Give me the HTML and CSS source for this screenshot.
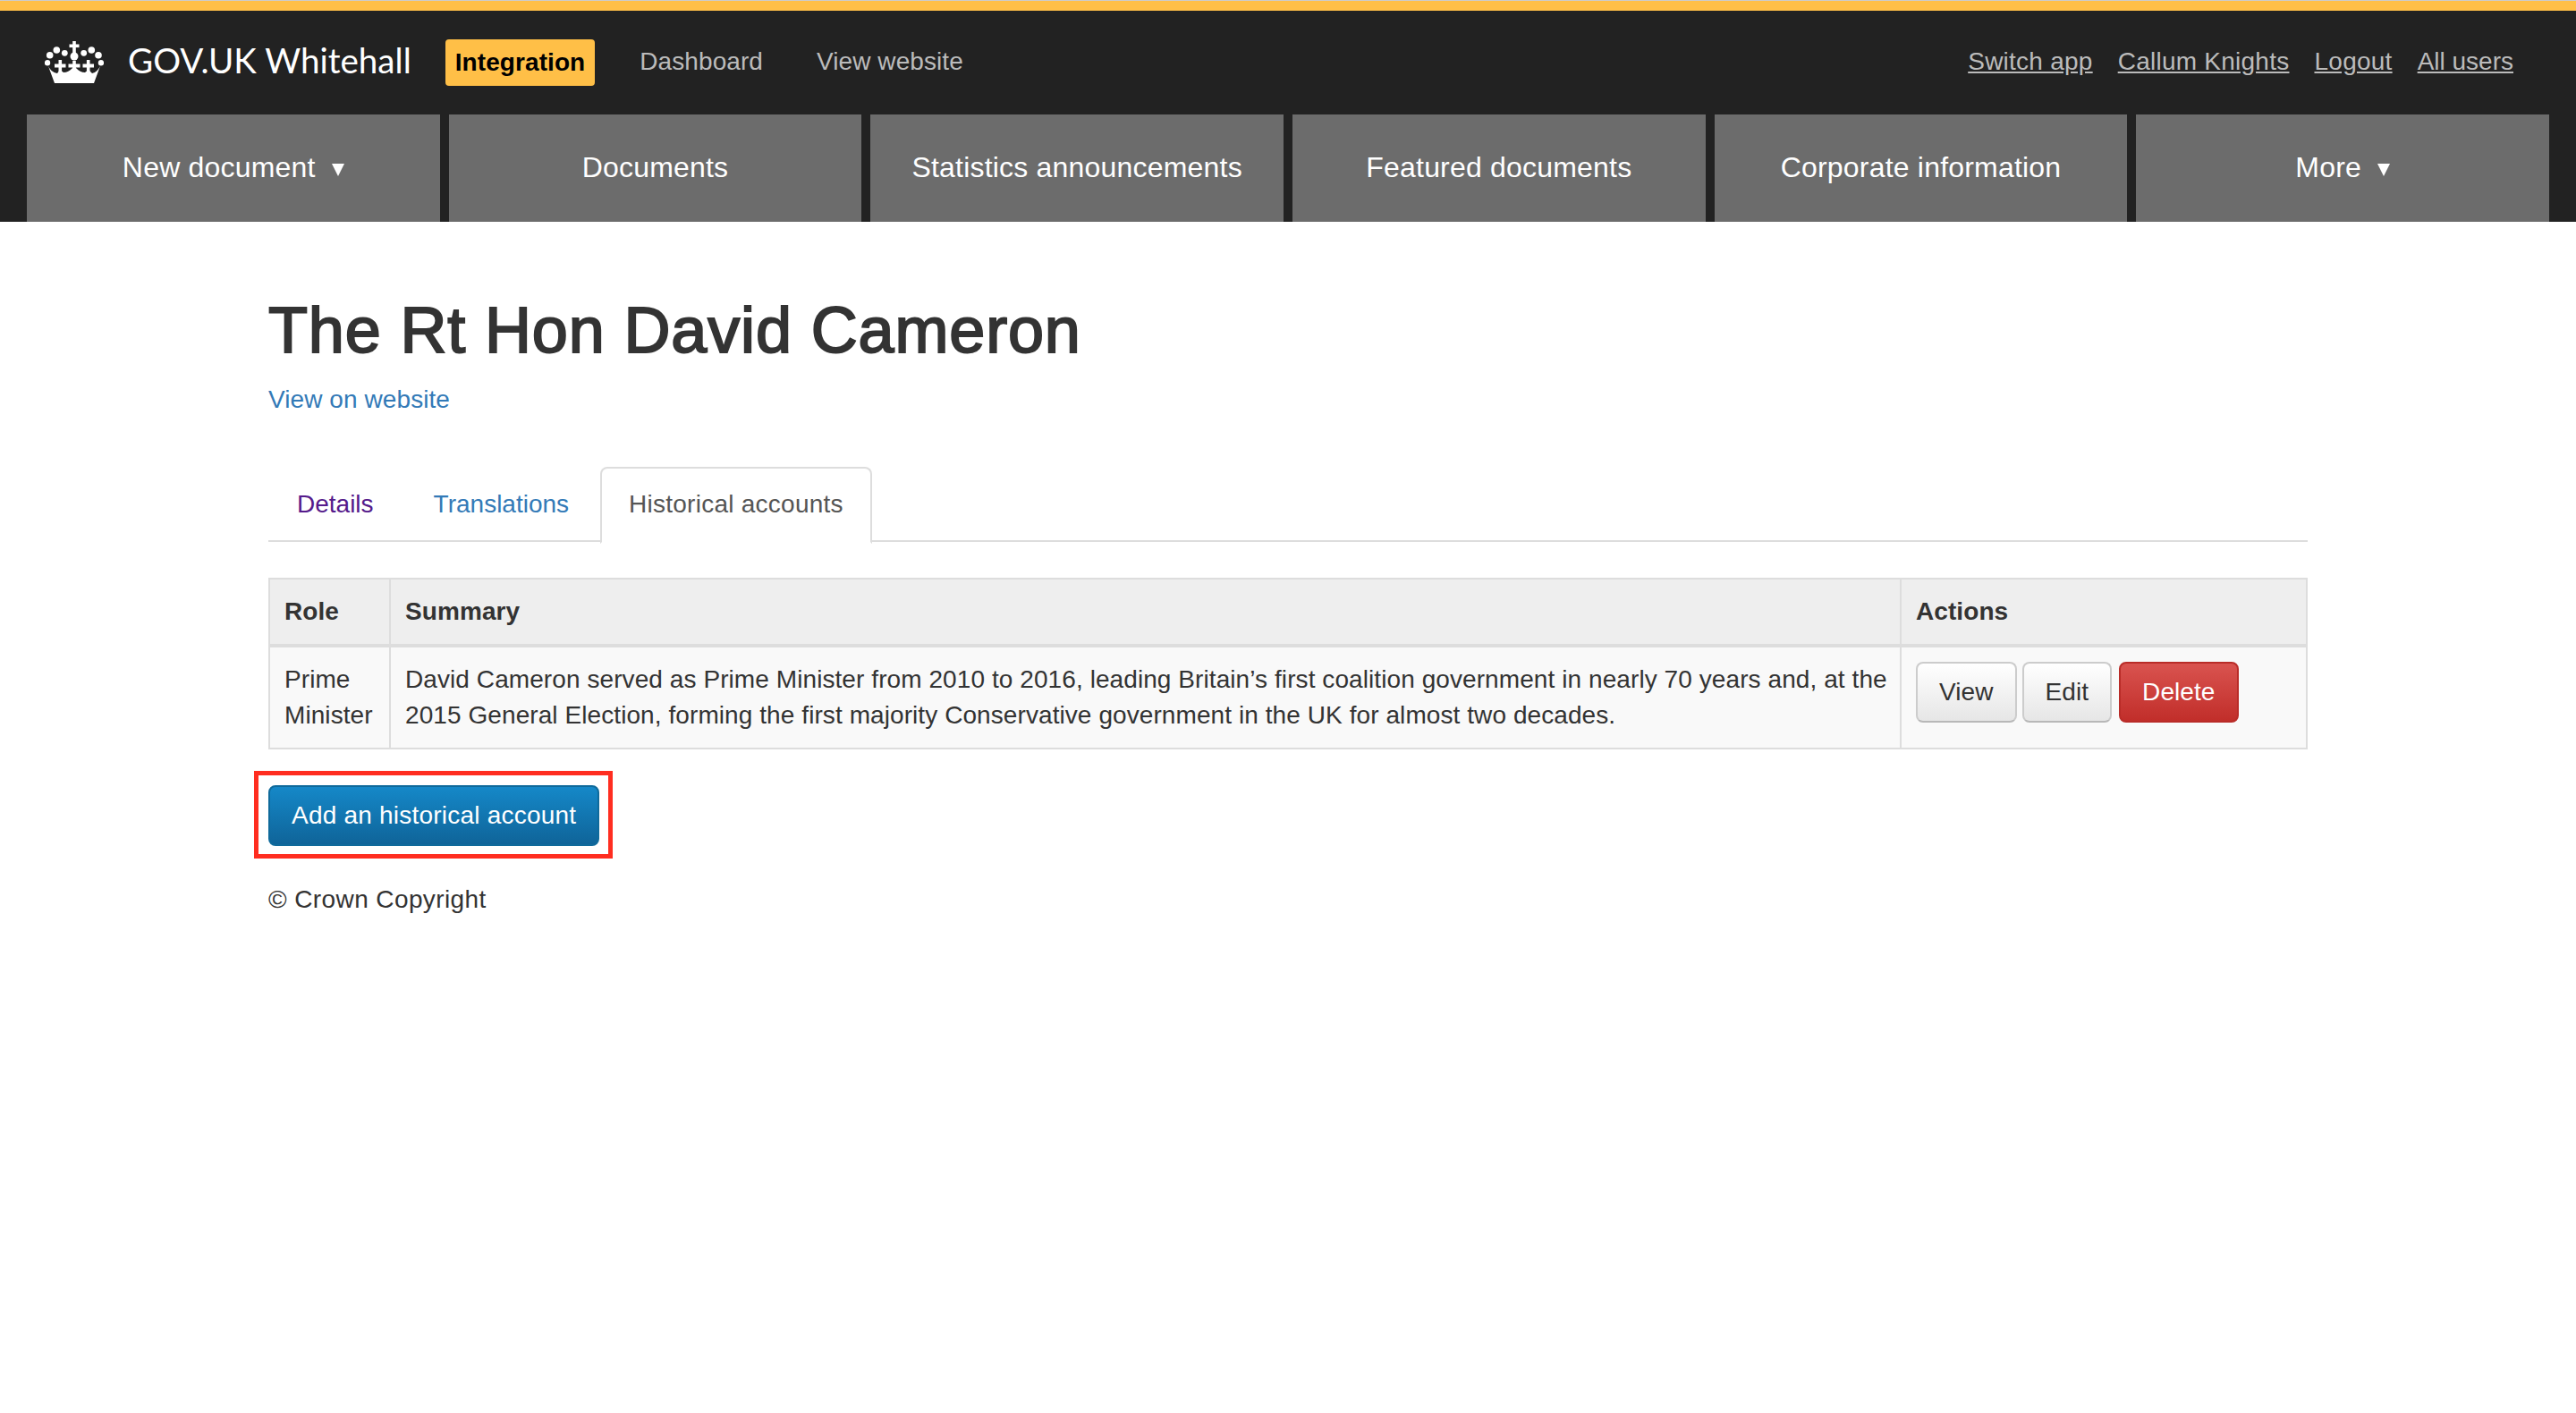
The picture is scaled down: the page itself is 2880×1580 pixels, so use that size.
FILE: index.html
```html
<!DOCTYPE html>
<html lang="en">

<head>
    <meta charset="UTF-8">
    <meta name="viewport" content="width=device-width, initial-scale=1.0">
    <title>The Rt Hon David Cameron - GOV.UK Whitehall</title>
    <link rel="stylesheet" href="styles.css">
</head>

<body>
    <header class="site-header">
        <div class="top-row">
            <a class="brand" href="#">
                <svg class="crown" viewBox="0 0 66 48" aria-hidden="true">
                    <g fill="#fff">
                        <rect x="31.2" y="1" width="3.6" height="13" />
                        <rect x="27.5" y="4.5" width="11" height="3.6" />
                        <circle cx="33" cy="18" r="4.5" />
                        <circle cx="22.3" cy="14.3" r="3.4" />
                        <circle cx="43.7" cy="14.3" r="3.4" />
                        <circle cx="13.3" cy="11" r="3.8" />
                        <circle cx="52.3" cy="11" r="3.8" />
                        <circle cx="5.7" cy="16.7" r="3.8" />
                        <circle cx="60" cy="16.7" r="3.8" />
                        <circle cx="3" cy="25.3" r="3.2" />
                        <circle cx="63" cy="25.3" r="3.2" />
                        <path d="M15.5 22 H19.1 V26.5 H23.5 V30.4 H19.1 V40 H15.5 V30.4 H11 V26.5 H15.5 Z" />
                        <path d="M31.2 23 H34.8 V26.5 H39.5 V30.4 H34.8 V36 H31.2 V30.4 H26.5 V26.5 H31.2 Z" />
                        <path d="M46.9 22 H50.5 V26.5 H55 V30.4 H50.5 V40 H46.9 V30.4 H42.5 V26.5 H46.9 Z" />
                        <path d="M4 29 L11 48 H55 L62 29 C60 33 57 36 53 37 L49 33 L45 36 C41 36 38 34 36 32 L33 29 L30 32 C28 34 25 36 21 36 L17 33 L14 37 C9 36 6 33 4 29 Z" />
                    </g>
                </svg>
                <span class="brand-name">GOV.UK Whitehall</span>
            </a>
            <span class="env-label">Integration</span>
            <a class="plain-link" href="#">Dashboard</a>
            <a class="plain-link" href="#">View website</a>
            <nav class="user-links">
                <a href="#">Switch app</a>
                <a href="#">Callum Knights</a>
                <a href="#">Logout</a>
                <a href="#">All users</a>
            </nav>
        </div>
        <nav class="main-nav">
            <a href="#">New document <span class="caret"></span></a>
            <a href="#">Documents</a>
            <a href="#">Statistics announcements</a>
            <a href="#">Featured documents</a>
            <a href="#">Corporate information</a>
            <a href="#">More <span class="caret"></span></a>
        </nav>
    </header>

    <main class="container">
        <h1>The Rt Hon David Cameron</h1>
        <p class="view-link"><a href="#">View on website</a></p>

        <ul class="tabs">
            <li><a class="visited" href="#">Details</a></li>
            <li><a href="#">Translations</a></li>
            <li class="active"><a href="#">Historical accounts</a></li>
        </ul>

        <table class="accounts">
            <thead>
                <tr>
                    <th class="col-role">Role</th>
                    <th>Summary</th>
                    <th class="col-actions">Actions</th>
                </tr>
            </thead>
            <tbody>
                <tr>
                    <td>Prime Minister</td>
                    <td class="summary">David Cameron served as Prime Minister from 2010 to 2016, leading Britain’s first coalition government in nearly 70 years and, at the 2015 General Election, forming the first majority Conservative government in the UK for almost two decades.</td>
                    <td>
                        <div class="actions">
                            <a class="btn" href="#">View</a>
                            <a class="btn" href="#">Edit</a>
                            <a class="btn btn-danger" href="#">Delete</a>
                        </div>
                    </td>
                </tr>
            </tbody>
        </table>

        <div class="highlight">
            <a class="btn btn-primary" href="#">Add an historical account</a>
        </div>

        <footer class="copyright">© Crown Copyright</footer>
    </main>
</body>

</html>
```
FILE: styles.css
```css
body {
    margin: 0;
    border-top: 1px solid #ccc;
    background-color: #fff;
    color: #333;
    font-family: "Liberation Sans", Arial, sans-serif;
    font-size: 28px;
    line-height: 40px;
    letter-spacing: 0.08px;
}

a {
    text-decoration: none;
}

.site-header {
    background-color: #222;
    border-top: 11px solid #ffbf47;
    height: 236px;
    padding: 0 30px;
}

.top-row {
    display: flex;
    align-items: center;
    height: 116px;
    padding-bottom: 2px;
    box-sizing: border-box;
}

.brand {
    display: flex;
    align-items: center;
    color: #fff;
    margin-left: 20px;
}

.crown {
    width: 66px;
    height: 48px;
}

.brand-name {
    font-family: Lato, sans-serif;
    font-size: 38.6px;
    letter-spacing: 0;
    margin-left: 27px;
    padding-bottom: 4px;
}

.env-label {
    background-color: #ffbf47;
    color: #000;
    font-weight: bold;
    border-radius: 4px;
    padding: 6px 11px;
    margin: 2px 50px 0 38px;
}

.plain-link {
    color: #bbb;
    margin-right: 60px;
}

.user-links {
    display: flex;
    gap: 28px;
    margin-left: auto;
    margin-right: 40px;
}

.user-links a {
    color: #bbb;
    text-decoration: underline;
    letter-spacing: 0.25px;
}

.user-links a:last-child {
    letter-spacing: 0;
}

.main-nav {
    display: flex;
    gap: 10px;
}

.main-nav a {
    flex: 1;
    height: 120px;
    box-sizing: border-box;
    padding-bottom: 3px;
    background-color: #6c6c6c;
    color: #fff;
    font-size: 32px;
    letter-spacing: 0.2px;
    display: flex;
    align-items: center;
    justify-content: center;
    white-space: pre;
}

.caret {
    width: 0;
    height: 0;
    border-left: 7px solid transparent;
    border-right: 7px solid transparent;
    border-top: 14px solid #fff;
    margin: 6px 0 0 9px;
}

.container {
    width: 2280px;
    margin: 0 auto;
}

h1 {
    font-size: 72px;
    font-weight: normal;
    -webkit-text-stroke: 2px #333;
    letter-spacing: 0.85px;
    line-height: 80px;
    margin: 81px 0 0;
}

.view-link {
    margin: 18px 0 0;
}

.view-link a,
.tabs a {
    color: #337ab7;
}

.tabs {
    display: flex;
    gap: 3px;
    list-style: none;
    margin: 55px 0 0;
    padding: 0;
    border-bottom: 2px solid #ddd;
    height: 82px;
    letter-spacing: 0;
}

.tabs a {
    display: block;
    padding: 20px 30px 22px;
    border: 2px solid transparent;
    border-radius: 8px 8px 0 0;
}

.tabs .visited {
    color: #551a8b;
}

.tabs .active a {
    color: #555;
    background-color: #fff;
    border-color: #ddd #ddd #fff;
    height: 40px;
    letter-spacing: 0.25px;
}

.accounts {
    width: 100%;
    table-layout: fixed;
    border-collapse: collapse;
    margin-top: 40px;
}

.accounts th,
.accounts td {
    border: 2px solid #ddd;
    padding: 16px;
    text-align: left;
    vertical-align: top;
}

.accounts th {
    background-color: #eee;
    border-bottom-width: 4px;
}

.accounts td {
    background-color: #f9f9f9;
}

.accounts .summary {
    padding-right: 8px;
}

.col-role {
    width: 101px;
}

.col-actions {
    width: 420px;
}

.actions {
    display: flex;
    gap: 6px;
}

.btn {
    display: inline-block;
    padding: 12px 24px;
    border: 2px solid #ccc;
    border-bottom-color: #b8b8b8;
    border-radius: 8px;
    color: #333;
    background-image: linear-gradient(#fff, #e6e6e6);
}

.btn-danger {
    margin-left: 2px;
    color: #fff;
    border-color: #b92c28;
    background-image: linear-gradient(#d9534f, #c12e2a);
}

.btn-primary {
    color: #fff;
    border-color: #0f6a9b;
    background-image: linear-gradient(#1588c8, #0f6499);
    display: block;
    letter-spacing: 0.22px;
}

.highlight {
    position: relative;
    width: fit-content;
    margin-top: 40px;
}

.highlight::after {
    content: '';
    position: absolute;
    top: -16px;
    left: -16px;
    right: -15px;
    bottom: -14px;
    border: 5px solid #ff2d20;
    pointer-events: none;
}

.copyright {
    margin-top: 40px;
    letter-spacing: 0.4px;
}
```
